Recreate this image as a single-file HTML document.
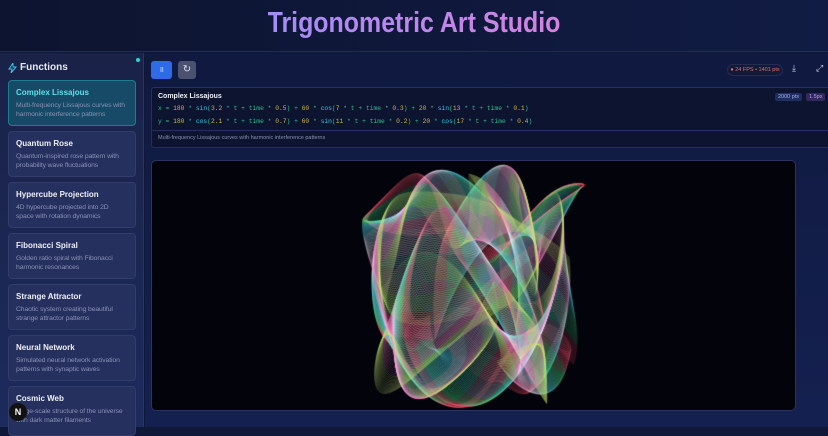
<!DOCTYPE html>
<html><head><meta charset="utf-8"><style>
*{box-sizing:border-box;margin:0;padding:0}
body{width:828px;height:427px;overflow:hidden;background:#0f1838;font-family:"Liberation Sans",sans-serif;position:relative}
.hdr{position:absolute;left:0;top:0;width:828px;height:52px;background:linear-gradient(90deg,#0d1430,#111c44);border-bottom:1px solid #222c4e}
.hdr h1{position:absolute;left:0;right:0;top:7px;text-align:center;font-size:29px;font-weight:bold;transform:scaleX(0.86);}
.hdr h1 span{background:linear-gradient(90deg,#a58cf6,#d383e0);-webkit-background-clip:text;color:transparent}
.side{position:absolute;left:0;top:53px;width:144px;height:374px;background:linear-gradient(180deg,#1a2248,#1c2a5c);border-right:1px solid #2a3560}
.side .t{position:absolute;left:20px;top:9px;color:#e6e9f3;font-size:10px;font-weight:bold}
.dot{position:absolute;left:136px;top:5px;width:4px;height:4px;border-radius:50%;background:#2dd4d4}
.card{position:absolute;left:8px;width:128px;height:46px;border-radius:4px;background:#26305e;border:1px solid #323c6a;padding:7px 7px}
.card b{display:block;color:#eef0f7;font-size:8px;margin-bottom:4px}
.card span{display:block;color:#8891b3;font-size:6.8px;line-height:9px;letter-spacing:-0.1px}
.card.a{background:#164a66;border-color:#1f7c90}
.card.a b{color:#5ee0e8}
.main{position:absolute;left:145px;top:53px;right:0;bottom:0;background:linear-gradient(180deg,#101a40,#142050)}
.btn{position:absolute;top:61px;width:21px;height:18px;border-radius:3px}
.panel{position:absolute;left:151px;top:87px;width:680px;height:61px;background:#0d1430;border:1px solid #263060;border-radius:3px}
.mono{font-family:"Liberation Mono",monospace;font-size:6.3px;position:absolute;left:6px;color:#2dbd8a}
.f{color:#3cc4e8}.n{color:#c8b24a}
.cv{position:absolute;left:151px;top:160px;width:645px;height:251px;background:#02030b;border:1px solid #2a3460;border-radius:5px;overflow:hidden}
</style></head><body>
<div class="hdr"><h1><span>Trigonometric Art Studio</span></h1></div>
<div class="side">
<svg style="position:absolute;left:8px;top:10px" width="9" height="10" viewBox="0 0 9 10"><path d="M5 0L1 6h3l-1 4 5-6H5z" fill="none" stroke="#3cc4e8" stroke-width="1"/></svg>
<div class="t">Functions</div><div class="dot"></div>
</div>
<div class="card a" style="top:80px"><b>Complex Lissajous</b><span>Multi-frequency Lissajous curves with harmonic interference patterns</span></div>
<div class="card" style="top:131px"><b>Quantum Rose</b><span>Quantum-inspired rose pattern with probability wave fluctuations</span></div>
<div class="card" style="top:182px"><b>Hypercube Projection</b><span>4D hypercube projected into 2D space with rotation dynamics</span></div>
<div class="card" style="top:233px"><b>Fibonacci Spiral</b><span>Golden ratio spiral with Fibonacci harmonic resonances</span></div>
<div class="card" style="top:284px"><b>Strange Attractor</b><span>Chaotic system creating beautiful strange attractor patterns</span></div>
<div class="card" style="top:335px"><b>Neural Network</b><span>Simulated neural network activation patterns with synaptic waves</span></div>
<div class="card" style="top:386px;height:50px"><b>Cosmic Web</b><span>Large-scale structure of the universe with dark matter filaments</span></div>
<div style="position:absolute;left:9px;top:403px;width:18px;height:18px;border-radius:50%;background:#111;color:#fff;font-size:9px;text-align:center;line-height:18px;font-weight:bold">N</div>
<div class="main"></div>
<div class="btn" style="left:151px;background:#2f6ae8;color:#cfe0ff;font-size:8px;text-align:center;line-height:18px">॥</div>
<div class="btn" style="left:178px;width:18px;background:#4a5270;color:#dde;font-size:10px;text-align:center;line-height:18px">↻</div>
<div style="position:absolute;left:727px;top:64px;width:56px;height:12px;border-radius:6px;background:#121a38;border:1px solid #242c50;color:#e0706a;font-size:5.5px;line-height:10px;text-align:center">● 24 FPS • 1401 pts</div>
<div style="position:absolute;left:792px;top:63px;color:#cfd4e6;font-size:9px">⤓</div>
<div style="position:absolute;left:816px;top:63px;color:#cfd4e6;font-size:9px">⤢</div>
<div class="panel">
<div style="position:absolute;left:6px;top:5px;color:#eef0f7;font-size:7px;font-weight:bold">Complex Lissajous</div>
<div style="position:absolute;left:623px;top:5px;background:#1f2d60;color:#9fb0e0;font-size:5.5px;padding:1px 3px;border-radius:2px">2000 pts</div>
<div style="position:absolute;left:654px;top:5px;background:#33285e;color:#b59be8;font-size:5.5px;padding:1px 3px;border-radius:2px">1.5px</div>
<div class="mono" style="top:17px">x = <span class="n">180</span> * <span class="f">sin</span>(<span class="n">3.2</span> * t + time * <span class="n">0.5</span>) + <span class="n">60</span> * <span class="f">cos</span>(<span class="n">7</span> * t + time * <span class="n">0.3</span>) + <span class="n">20</span> * <span class="f">sin</span>(<span class="n">13</span> * t + time * <span class="n">0.1</span>)</div>
<div class="mono" style="top:30px">y = <span class="n">180</span> * <span class="f">cos</span>(<span class="n">2.1</span> * t + time * <span class="n">0.7</span>) + <span class="n">60</span> * <span class="f">sin</span>(<span class="n">11</span> * t + time * <span class="n">0.2</span>) + <span class="n">20</span> * <span class="f">cos</span>(<span class="n">17</span> * t + time * <span class="n">0.4</span>)</div>
<div style="position:absolute;left:0;right:0;top:42px;border-top:1px solid #263060"></div>
<div style="position:absolute;left:6px;top:47px;color:#8891b3;font-size:5.5px">Multi-frequency Lissajous curves with harmonic interference patterns</div>
</div>
<div class="cv"><canvas id="c" width="645" height="251"></canvas></div>
<script>
var c=document.getElementById('c').getContext('2d');
var cx=322,cy=126,sx=112/260,sy=122/260;
c.lineWidth=0.6;
var cols=['255,90,110','80,230,140','90,220,230','240,240,255','255,140,200','200,230,120'];
for(var k=0;k<90;k++){
 var tm=k*0.035;
 c.beginPath();
 for(var i=0;i<=700;i++){
  var t=i/700*Math.PI*2;
  var x=180*Math.sin(3.2*t+tm*0.5)+60*Math.cos(7*t+tm*0.3)+20*Math.sin(13*t+tm*0.1);
  var y=180*Math.cos(2.1*t+tm*0.7)+60*Math.sin(11*t+tm*0.2)+20*Math.cos(17*t+tm*0.4);
  if(i)c.lineTo(cx+x*sx,cy+y*sy);else c.moveTo(cx+x*sx,cy+y*sy);
 }
 c.strokeStyle='rgba('+cols[Math.floor(k/15)%cols.length]+',0.4)';
 c.stroke();
}
</script>
</body></html>
